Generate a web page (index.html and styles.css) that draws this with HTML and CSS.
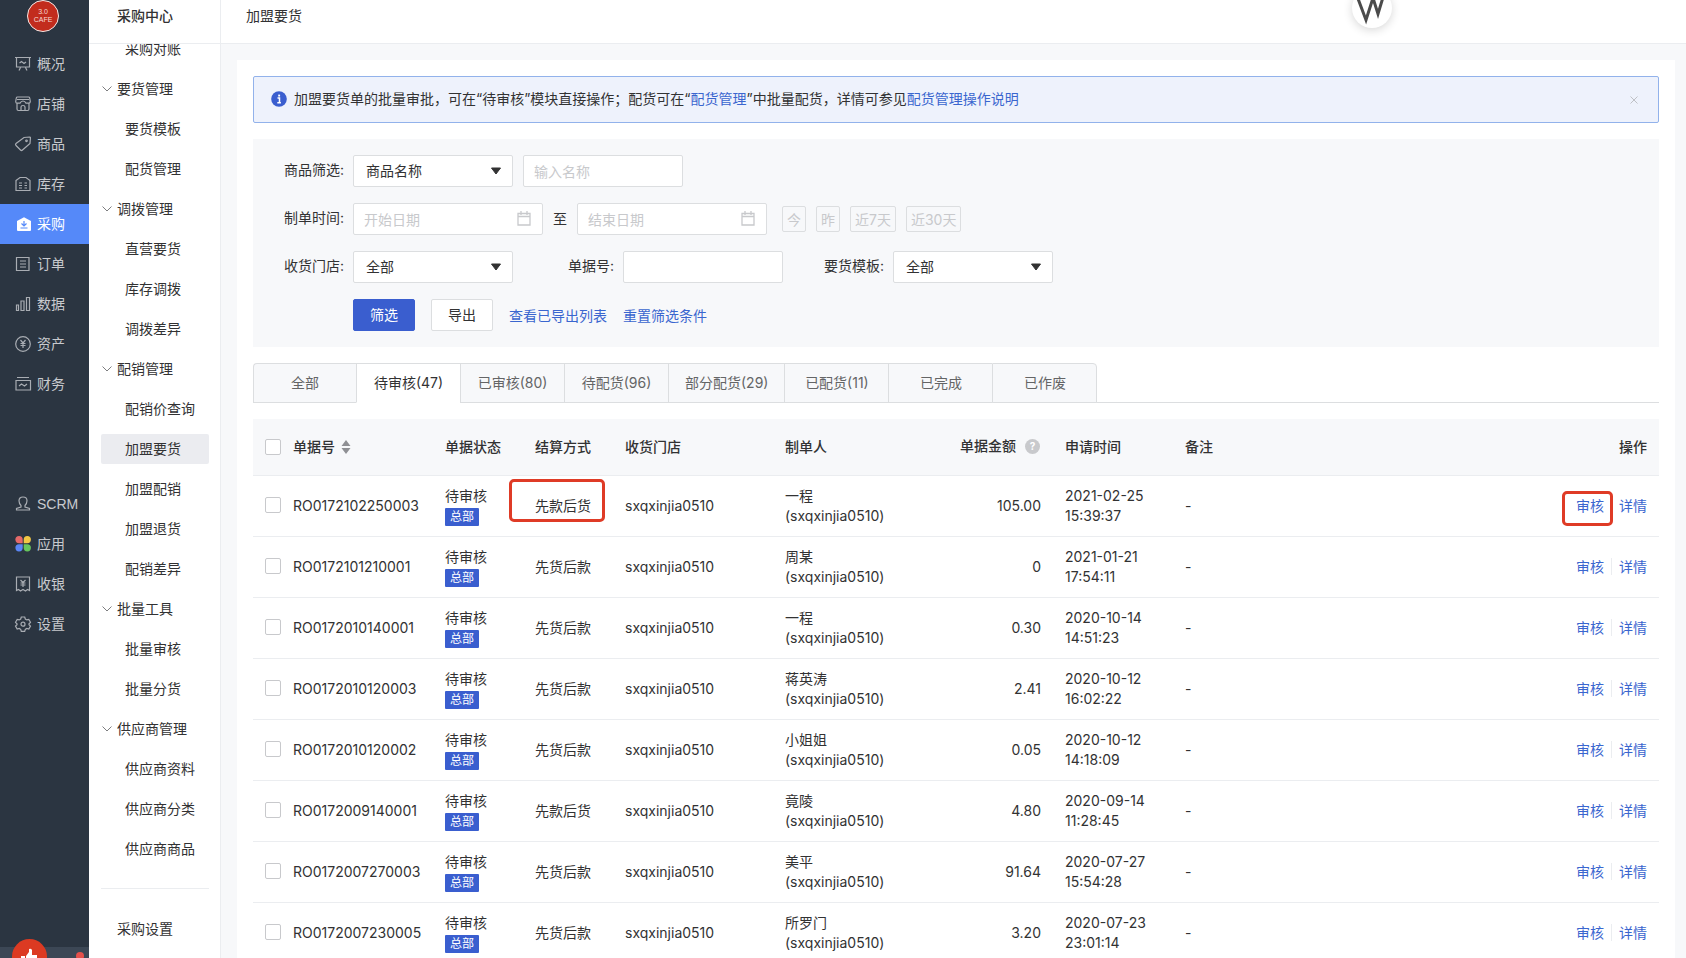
FILE: index.html
```html
<!DOCTYPE html>
<html lang="zh-CN">
<head>
<meta charset="utf-8">
<title>加盟要货</title>
<link rel="stylesheet" href="styles.css">
</head>
<body>
<div class="app">
  <nav class="rail" aria-label="主导航">
    <div class="brand"><span class="brand-logo">3.0<br>CAFE</span></div>
    <a class="rail-item" href="#"><svg class="icon" viewBox="0 0 16 16"><path d="M0 1.500h16M1.500 1.500v9.500h13V1.500M5.500 11.500 4 14.500M10.500 11.500 12 14.500M4.500 7l2-1.500 2.500 2 2-1.500"/></svg>概况</a>
    <a class="rail-item" href="#"><svg class="icon" viewBox="0 0 16 16"><path d="M2.500 1h11q1 0 1.200 1l.6 3.500q0 1.700-1.500 1.700H11Q10 5 8 5T5 7.200H2.200Q.7 7.200.7 5.500L1.300 2q.2-1 1.200-1zM2 7.500v5.500q0 1.500 1.500 1.500h9q1.500 0 1.500-1.500V7.500M6 14.500V11q0-1.500 2-1.500t2 1.500v3.500M2 3.500h12"/></svg>店铺</a>
    <a class="rail-item" href="#"><svg class="icon" viewBox="0 0 16 16"><path d="M9 1.500 14.500 1q1 0 .9 1L15 7.500 7.500 14q-1 1-2 0L1 9.500q-1-1 0-2z"/><circle cx="11.500" cy="4.800" r=".8"/></svg>商品</a>
    <a class="rail-item" href="#"><svg class="icon" viewBox="0 0 16 16"><path d="M1 4.500 5 1.500h6l4 3V14.500H1zM4 7h3M9.500 7h2.500M4 9.500h3M9.500 9.500h2.500M4 12h3M9.500 12h2.500"/></svg>库存</a>
    <a class="rail-item rail-active" href="#" aria-current="page"><svg class="icon" viewBox="0 0 16 16"><path class="solid" d="M2 5 9 1.200 16 5v9q0 1-1 1H3q-1 0-1-1z"/><path class="mark" d="M9 5v5M6.500 7.500 9 10l2.500-2.500M5.500 12h7"/></svg>采购</a>
    <a class="rail-item" href="#"><svg class="icon" viewBox="0 0 16 16"><path d="M1.500 1.500h12.500v13H1.500zM5 5h6M5 8h6M5 11h6"/></svg>订单</a>
    <a class="rail-item" href="#"><svg class="icon" viewBox="0 0 16 16"><path d="M1.500 9h2v5.500h-2zM6 5h3v9.500H6zM11.500 1.500h3v13h-3z"/></svg>数据</a>
    <a class="rail-item" href="#"><svg class="icon" viewBox="0 0 16 16"><circle cx="8" cy="8" r="7.300"/><path d="M5.500 4 8 7l2.500-3M8 7v5M5.500 7.500h5M5.500 9.500h5"/></svg>资产</a>
    <a class="rail-item" href="#"><svg class="icon" viewBox="0 0 16 16"><path d="M2 1.500h12M1 4.500h14.500V14H1zM4 10l2.500-2 3 2L12 8"/></svg>财务</a>
    <div class="rail-gap"></div>
    <a class="rail-item rail-latin" href="#"><svg class="icon" viewBox="0 0 16 16"><path d="M6 9.500Q4 7.500 4 4.800 4 1 8 1t4 3.800Q12 7.500 10 9.500v1.500l4.500 1.500V14h-13v-1.500L6 11z"/></svg>SCRM</a>
    <a class="rail-item" href="#"><svg class="icon" viewBox="0 0 16 16"><path class="petal-red" d="M4 0a3.700 3.700 0 0 1 3.700 3.700v3.500H4A3.600 3.600 0 0 1 4 0z"/><path class="petal-yellow" d="M12.300 0a3.600 3.600 0 0 1 0 7.200H8.700V3.700A3.700 3.700 0 0 1 12.300 0z"/><path class="petal-blue" d="M4 15.400a3.600 3.600 0 0 1 0-7.200h3.700v3.500A3.700 3.700 0 0 1 4 15.400z"/><path class="petal-green" d="M12.300 15.400a3.700 3.700 0 0 1-3.600-3.700V8.200h3.600a3.600 3.600 0 0 1 0 7.200z"/></svg>应用</a>
    <a class="rail-item" href="#"><svg class="icon" viewBox="0 0 16 16"><path d="M1.500 1h13v13.500L12.500 13.500l-2 1.500L8 13.500 5.500 15l-2-1.500-2 1zM5.500 4 8 6.500 10.500 4M8 6.500V11M5.500 7h5M5.500 9h5"/></svg>收银</a>
    <a class="rail-item" href="#"><svg class="icon" viewBox="0 0 16 16"><path d="M6.300 1h3.400l.6 2 1.500.9 2-.5 1.700 2.900L14 7.800v.9l1.500 1.400-1.700 2.900-2-.5-1.500.9-.6 2H6.300l-.6-2-1.500-.9-2 .5L.5 10.100 2 8.700v-.9L.5 6.300l1.700-2.900 2 .5L5.700 3z"/><circle cx="8" cy="8.200" r="2"/></svg>设置</a>
    <div class="rail-foot">
      <button class="thumb" type="button" aria-label="点赞"><svg viewBox="0 0 18 18"><path d="M1 8h4v9H1zM6 8l3-4V1q2-1 3 1v5h5v3l-2 7H6z"/></svg></button>
      <i class="dot"></i>
    </div>
  </nav>

  <aside class="side">
    <h2 class="side-title">采购中心</h2>
    <div class="side-scroll">
      <ul class="menu">
        <li><a href="#">采购对账</a></li>
        <li><button class="group" type="button"><svg viewBox="0 0 10 6"><path d="M.5.5 5 5 9.500.5"/></svg>要货管理</button></li>
        <li><a href="#">要货模板</a></li>
        <li><a href="#">配货管理</a></li>
        <li><button class="group" type="button"><svg viewBox="0 0 10 6"><path d="M.5.5 5 5 9.500.5"/></svg>调拨管理</button></li>
        <li><a href="#">直营要货</a></li>
        <li><a href="#">库存调拨</a></li>
        <li><a href="#">调拨差异</a></li>
        <li><button class="group" type="button"><svg viewBox="0 0 10 6"><path d="M.5.5 5 5 9.500.5"/></svg>配销管理</button></li>
        <li><a href="#">配销价查询</a></li>
        <li><a class="current" href="#">加盟要货</a></li>
        <li><a href="#">加盟配销</a></li>
        <li><a href="#">加盟退货</a></li>
        <li><a href="#">配销差异</a></li>
        <li><button class="group" type="button"><svg viewBox="0 0 10 6"><path d="M.5.5 5 5 9.500.5"/></svg>批量工具</button></li>
        <li><a href="#">批量审核</a></li>
        <li><a href="#">批量分货</a></li>
        <li><button class="group" type="button"><svg viewBox="0 0 10 6"><path d="M.5.5 5 5 9.500.5"/></svg>供应商管理</button></li>
        <li><a href="#">供应商资料</a></li>
        <li><a href="#">供应商分类</a></li>
        <li><a href="#">供应商商品</a></li>
      </ul>
      <hr class="rule">
      <a class="side-setting" href="#">采购设置</a>
    </div>
  </aside>

  <main class="main">
    <header class="topbar"><h1>加盟要货</h1></header>
    <div class="bubble"><svg viewBox="0 0 40 40"><path d="M5 8l9 24 7-22 5 16 6-20"/></svg></div>
    <section class="panel">
      <div class="notice">
        <svg class="info" viewBox="0 0 16 16"><circle cx="8" cy="8" r="7.800"/><path d="M6.500 7H8.500V11.500M6.300 11.800h3.600"/><rect x="7.200" y="3.600" width="1.900" height="1.900"/></svg>
        <p>加盟要货单的批量审批，可在“待审核”模块直接操作；配货可在“<a href="#">配货管理</a>”中批量配货，详情可参见<a href="#">配货管理操作说明</a></p>
        <button class="close" type="button" aria-label="关闭"><svg viewBox="0 0 8 8"><path d="M.5.5l7 7M7.500.5l-7 7"/></svg></button>
      </div>

      <form class="filter">
        <div class="line">
          <label class="name" for="kind">商品筛选:</label>
          <span class="pick"><select id="kind"><option>商品名称</option></select><svg viewBox="0 0 12 8"><path d="M1.500 1h9L6 7z"/></svg></span>
          <input class="field" type="text" placeholder="输入名称" aria-label="商品名称">
        </div>
        <div class="line">
          <label class="name" for="from">制单时间:</label>
          <span class="date"><input class="field" id="from" type="text" placeholder="开始日期"><svg viewBox="0 0 14 15"><path d="M1 2.500h12v11.500H1zM1 5.500h12M4 0v4M10 0v4"/></svg></span>
          <span class="to">至</span>
          <span class="date"><input class="field" type="text" placeholder="结束日期" aria-label="结束日期"><svg viewBox="0 0 14 15"><path d="M1 2.500h12v11.500H1zM1 5.500h12M4 0v4M10 0v4"/></svg></span>
          <span class="quick"><button type="button">今</button><button type="button">昨</button><button type="button">近7天</button><button type="button">近30天</button></span>
        </div>
        <div class="line">
          <label class="name" for="shop">收货门店:</label>
          <span class="pick"><select id="shop"><option>全部</option></select><svg viewBox="0 0 12 8"><path d="M1.500 1h9L6 7z"/></svg></span>
          <label class="name" for="no">单据号:</label>
          <input class="field" id="no" type="text">
          <label class="name" for="tpl">要货模板:</label>
          <span class="pick"><select id="tpl"><option>全部</option></select><svg viewBox="0 0 12 8"><path d="M1.500 1h9L6 7z"/></svg></span>
        </div>
        <div class="line actions">
          <button class="btn primary" type="button">筛选</button>
          <button class="btn" type="button">导出</button>
          <a href="#">查看已导出列表</a>
          <a href="#">重置筛选条件</a>
        </div>
      </form>

      <div class="tabs" role="tablist">
        <button type="button" role="tab">全部</button>
        <button type="button" role="tab" aria-selected="true">待审核(47)</button>
        <button type="button" role="tab">已审核(80)</button>
        <button type="button" role="tab">待配货(96)</button>
        <button type="button" role="tab">部分配货(29)</button>
        <button type="button" role="tab">已配货(11)</button>
        <button type="button" role="tab">已完成</button>
        <button type="button" role="tab">已作废</button>
      </div>

      <table class="orders">
        <colgroup><col class="c-check"><col class="c-no"><col class="c-state"><col class="c-pay"><col class="c-shop"><col class="c-user"><col class="c-sum"><col class="c-time"><col><col class="c-ops"></colgroup>
        <thead>
          <tr>
            <th><input type="checkbox" aria-label="全选"></th>
            <th><span class="sort">单据号<svg viewBox="0 0 10 14"><path d="M5 0l4.500 6h-9zM5 14l4.500-6h-9z"/></svg></span></th>
            <th>单据状态</th><th>结算方式</th><th>收货门店</th><th>制单人</th>
            <th class="sum"><span class="hint">单据金额<i>?</i></span></th>
            <th>申请时间</th><th>备注</th><th class="ops">操作</th>
          </tr>
        </thead>
        <tbody>
          <tr><td><input type="checkbox" aria-label="RO0172102250003"></td><td>RO0172102250003</td><td>待审核<br><span class="tag">总部</span></td><td><span class="ringed ring-pay">先款后货</span></td><td>sxqxinjia0510</td><td>一程<br>(sxqxinjia0510)</td><td class="sum">105.00</td><td>2021-02-25<br>15:39:37</td><td>-</td><td class="ops"><a class="ringed ring-audit" href="#">审核</a><a href="#">详情</a></td></tr>
          <tr><td><input type="checkbox" aria-label="RO0172101210001"></td><td>RO0172101210001</td><td>待审核<br><span class="tag">总部</span></td><td>先货后款</td><td>sxqxinjia0510</td><td>周某<br>(sxqxinjia0510)</td><td class="sum">0</td><td>2021-01-21<br>17:54:11</td><td>-</td><td class="ops"><a href="#">审核</a><a href="#">详情</a></td></tr>
          <tr><td><input type="checkbox" aria-label="RO0172010140001"></td><td>RO0172010140001</td><td>待审核<br><span class="tag">总部</span></td><td>先货后款</td><td>sxqxinjia0510</td><td>一程<br>(sxqxinjia0510)</td><td class="sum">0.30</td><td>2020-10-14<br>14:51:23</td><td>-</td><td class="ops"><a href="#">审核</a><a href="#">详情</a></td></tr>
          <tr><td><input type="checkbox" aria-label="RO0172010120003"></td><td>RO0172010120003</td><td>待审核<br><span class="tag">总部</span></td><td>先货后款</td><td>sxqxinjia0510</td><td>蒋英涛<br>(sxqxinjia0510)</td><td class="sum">2.41</td><td>2020-10-12<br>16:02:22</td><td>-</td><td class="ops"><a href="#">审核</a><a href="#">详情</a></td></tr>
          <tr><td><input type="checkbox" aria-label="RO0172010120002"></td><td>RO0172010120002</td><td>待审核<br><span class="tag">总部</span></td><td>先货后款</td><td>sxqxinjia0510</td><td>小姐姐<br>(sxqxinjia0510)</td><td class="sum">0.05</td><td>2020-10-12<br>14:18:09</td><td>-</td><td class="ops"><a href="#">审核</a><a href="#">详情</a></td></tr>
          <tr><td><input type="checkbox" aria-label="RO0172009140001"></td><td>RO0172009140001</td><td>待审核<br><span class="tag">总部</span></td><td>先款后货</td><td>sxqxinjia0510</td><td>竟陵<br>(sxqxinjia0510)</td><td class="sum">4.80</td><td>2020-09-14<br>11:28:45</td><td>-</td><td class="ops"><a href="#">审核</a><a href="#">详情</a></td></tr>
          <tr><td><input type="checkbox" aria-label="RO0172007270003"></td><td>RO0172007270003</td><td>待审核<br><span class="tag">总部</span></td><td>先货后款</td><td>sxqxinjia0510</td><td>美平<br>(sxqxinjia0510)</td><td class="sum">91.64</td><td>2020-07-27<br>15:54:28</td><td>-</td><td class="ops"><a href="#">审核</a><a href="#">详情</a></td></tr>
          <tr><td><input type="checkbox" aria-label="RO0172007230005"></td><td>RO0172007230005</td><td>待审核<br><span class="tag">总部</span></td><td>先货后款</td><td>sxqxinjia0510</td><td>所罗门<br>(sxqxinjia0510)</td><td class="sum">3.20</td><td>2020-07-23<br>23:01:14</td><td>-</td><td class="ops"><a href="#">审核</a><a href="#">详情</a></td></tr>
        </tbody>
      </table>
    </section>
  </main>
</div>
</body>
</html>
```
FILE: styles.css
```css
* { box-sizing: border-box; }

body {
  margin: 0;
  color: #323233;
  background: #f7f8fa;
  font: 14px/20px Inter, "Noto Sans CJK SC", sans-serif;
}

a { color: #3a66cf; text-decoration: none; }
button, input, select { font: inherit; color: inherit; margin: 0; }
button { cursor: pointer; }
h1, h2, p, ul { margin: 0; padding: 0; }
ul { list-style: none; }

.app { display: flex; height: 100vh; overflow: hidden; }

/* primary navigation */
.rail {
  display: flex;
  flex-direction: column;
  flex: none;
  width: 89px;
  background: #2b3541;
}
.brand { display: flex; justify-content: center; height: 44px; padding-right: 3px; }
.brand-logo {
  width: 32px;
  height: 32px;
  padding-top: 7px;
  border: 1px solid #f5e9e7;
  border-radius: 50%;
  background: #c22c1d;
  color: #f7d9d4;
  font: 7px/8px "Liberation Sans", Arial, sans-serif;
  text-align: center;
}
.rail-item {
  display: flex;
  align-items: center;
  gap: 6px;
  flex: none;
  height: 40px;
  padding: 0 0 1px 15px;
  color: #c8cace;
}
.rail-latin { font-family: "Liberation Sans", Arial, sans-serif; }
.rail-active { background: #5589f9; color: #fff; }
.rail-gap { flex: none; height: 80px; }
.icon {
  width: 16px;
  height: 16px;
  fill: none;
  stroke: #a9adb3;
  stroke-width: 1.2;
  overflow: visible;
}
.icon .solid { fill: #fff; stroke: none; }
.icon .mark { stroke: #5589f9; }
.icon .petal-red { fill: #e56a6a; stroke: none; }
.icon .petal-yellow { fill: #f2c744; stroke: none; }
.icon .petal-blue { fill: #5b86f5; stroke: none; }
.icon .petal-green { fill: #67c65c; stroke: none; }
.rail-foot {
  display: flex;
  justify-content: space-between;
  flex: none;
  height: 11px;
  margin-top: auto;
  padding: 0 5px 0 12px;
  background: #3c4755;
}
.thumb {
  flex: none;
  width: 35px;
  height: 35px;
  margin-top: -8px;
  padding: 7px 8px;
  border: 0;
  border-radius: 50%;
  background: #dc3a22;
}
.thumb svg { display: block; width: 18px; height: 18px; fill: #fff; }
.dot { width: 8px; height: 8px; margin-top: 5px; border-radius: 50%; background: #e5504b; }

/* secondary navigation */
.side {
  display: flex;
  flex-direction: column;
  flex: none;
  width: 132px;
  border-right: 1px solid #ebedf0;
  background: #fff;
}
.side-title {
  flex: none;
  height: 44px;
  padding: 6px 0 0 28px;
  border-bottom: 1px solid #ebedf0;
  font-size: 14px;
  font-weight: 500;
  line-height: 20px;
}
.side-scroll { flex: 1; min-height: 0; overflow: hidden; }
.menu { margin-top: -15px; padding: 0 11px 0 12px; }
.menu li { padding: 5px 0; }
.menu a {
  display: block;
  height: 30px;
  padding-left: 24px;
  border-radius: 2px;
  color: #323233;
  line-height: 30px;
}
.menu .current { background: #ebecf0; }
.group {
  display: flex;
  align-items: center;
  gap: 5px;
  height: 30px;
  padding: 0 0 0 1px;
  border: 0;
  background: none;
}
.group svg { width: 10px; height: 6px; fill: none; stroke: #7d7e80; }
.rule { margin: 19px 11px 0 12px; border: 0; border-top: 1px solid #ebedf0; }
.side-setting { display: block; padding: 30px 0 0 28px; color: #323233; }

/* content */
.main { position: relative; flex: 1; min-width: 0; overflow: hidden; }
.topbar {
  height: 44px;
  padding: 6px 25px 0;
  border-bottom: 1px solid #ebedf0;
  background: #fff;
}
.topbar h1 { font-size: 14px; font-weight: 400; line-height: 20px; }
.bubble {
  position: absolute;
  top: -12px;
  right: 294px;
  width: 40px;
  height: 40px;
  border-radius: 50%;
  background: #fff;
  box-shadow: 0 2px 10px rgba(0, 0, 0, .16);
}
.bubble svg { display: block; fill: none; stroke: #4b4b4b; stroke-width: 3; }
.panel { margin: 16px 11px 0 16px; padding: 16px; background: #fff; }

.notice {
  display: flex;
  align-items: center;
  gap: 7px;
  height: 47px;
  padding: 0 20px 0 17px;
  border: 1px solid #92b2eb;
  border-radius: 2px;
  background: #eef2fc;
}
.notice p { flex: 1; padding-bottom: 2px; }
.info { width: 16px; height: 16px; margin-bottom: 2px; fill: #3a5ecf; }
.info path { fill: none; stroke: #fff; stroke-width: 1.5; }
.info rect { fill: #fff; }
.close { display: flex; padding: 0; border: 0; background: none; }
.close svg { width: 8px; height: 8px; fill: none; stroke: #bfc1c6; }

.filter {
  display: flex;
  flex-direction: column;
  gap: 16px;
  margin-top: 16px;
  padding: 16px 0;
  background: #f7f8fa;
}
.line { display: flex; align-items: center; gap: 10px; height: 32px; }
.name { width: 100px; margin-right: -10px; padding: 0 9px 2px 0; text-align: right; }
.field {
  width: 160px;
  height: 32px;
  padding: 0 10px;
  border: 1px solid #dcdee0;
  border-radius: 2px;
  background: #fff;
}
.field::placeholder { color: #c8c9cc; opacity: 1; }
.pick, .date { position: relative; display: flex; }
.pick select {
  width: 160px;
  height: 32px;
  padding: 0 24px 0 12px;
  border: 1px solid #dcdee0;
  border-radius: 2px;
  background: #fff;
  appearance: none;
}
.pick svg {
  position: absolute;
  top: 12px;
  right: 11px;
  width: 12px;
  height: 8px;
  fill: #323233;
  stroke: #323233;
  stroke-linejoin: round;
  pointer-events: none;
}
.date .field { width: 190px; }
.date svg {
  position: absolute;
  top: 8px;
  right: 12px;
  width: 14px;
  height: 15px;
  fill: none;
  stroke: #c8c9cc;
  stroke-width: 1.3;
  pointer-events: none;
}
.quick { display: flex; gap: 10px; margin-left: 5px; }
.quick button {
  height: 26px;
  padding: 2px 4px 0;
  border: 1px solid #dcdee0;
  border-radius: 2px;
  background: none;
  color: #c8c9cc;
}
.actions { gap: 16px; padding-left: 100px; }
.actions a { padding-top: 2px; }
.btn {
  width: 62px;
  height: 32px;
  padding: 0;
  border: 1px solid #dcdee0;
  border-radius: 2px;
  background: #fff;
}
.primary { border-color: #3a5ecf; background: #3a5ecf; color: #fff; }

.tabs {
  display: flex;
  height: 40px;
  margin-top: 16px;
  border-bottom: 1px solid #dcdee0;
}
.tabs button {
  height: 40px;
  min-width: 104px;
  padding: 0 16px;
  border: 1px solid #dcdee0;
  border-right-width: 0;
  background: #f7f8fa;
  color: #646566;
}
.tabs button:first-child { min-width: 103px; border-top-left-radius: 4px; }
.tabs button:last-child { min-width: 105px; border-right-width: 1px; border-top-right-radius: 4px; }
.tabs [aria-selected="true"] { border-bottom-color: #fff; background: #fff; color: #323233; }

.orders {
  width: 100%;
  margin-top: 16px;
  border-collapse: separate;
  border-spacing: 0;
  table-layout: fixed;
}
.c-check { width: 40px; }
.c-no { width: 152px; }
.c-state, .c-pay { width: 90px; }
.c-shop, .c-user { width: 160px; }
.c-sum, .c-time { width: 120px; }
.c-ops { width: 120px; }
.orders th {
  height: 57px;
  padding: 0;
  border-bottom: 1px solid #ebedf0;
  background: #f7f8fa;
  font-weight: 500;
  text-align: left;
}
.orders td { padding: 10px 0; border-bottom: 1px solid #ebedf0; }
.orders th:first-child, .orders td:first-child { padding-left: 12px; }
.orders td:first-child { padding-bottom: 12px; }
.orders .sum { padding-right: 24px; text-align: right; }
.orders .ops { padding-right: 12px; text-align: right; }
.orders input {
  display: block;
  width: 16px;
  height: 16px;
  border: 1px solid #c8c9cc;
  border-radius: 2px;
  background: #fff;
  appearance: none;
}
.sort { display: flex; align-items: center; gap: 6px; }
.sort svg { width: 10px; height: 14px; fill: #8f9094; }
.hint { display: flex; align-items: center; justify-content: flex-end; gap: 9px; padding: 0 1px 2px 0; }
.hint i {
  width: 15px;
  height: 15px;
  border-radius: 50%;
  background: #c8c9cc;
  color: #fff;
  font: 700 10px/15px Inter, sans-serif;
  text-align: center;
}
.tag {
  display: block;
  width: 34px;
  height: 18px;
  margin-top: 2px;
  border-radius: 1px;
  background: #3a5ecf;
  color: #fff;
  font-size: 12px;
  line-height: 18px;
  text-align: center;
}
.ops a + a { margin-left: 7px; padding-left: 7px; border-left: 1px solid #ebedf0; }

/* highlight frames over cells */
.ringed { position: relative; }
.ringed::after {
  content: "";
  position: absolute;
  border: 3px solid #df3b26;
  border-radius: 5px;
  pointer-events: none;
}
.ring-pay::after { inset: -18px -14px -8px -26px; }
.ring-audit::after { inset: -6px -9px -12px -14px; }
```
